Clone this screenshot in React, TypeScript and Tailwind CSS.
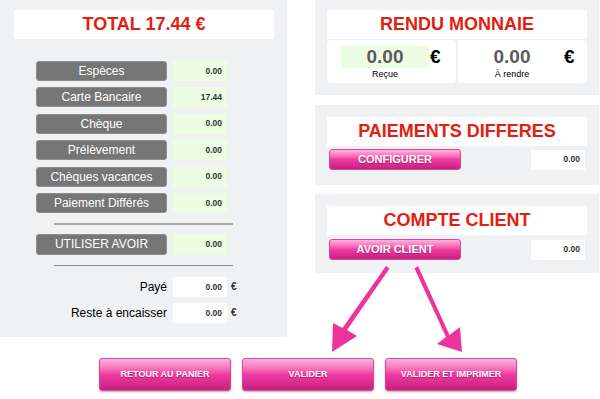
const font = { fontFamily: '"Liberation Sans", Arial, sans-serif' };

const payments = ["Espèces", "Carte Bancaire", "Chèque", "Prélèvement", "Chèques vacances", "Paiement Différés"];
const values = ["0.00", "17.44", "0.00", "0.00", "0.00", "0.00"];

const pinkBtn =
  "bg-gradient-to-b from-[#fbb3df] via-[#f03aa2] to-[#c81f80] border border-[#d9489d] text-white font-bold [text-shadow:0_1px_1px_rgba(120,0,60,0.5)]";

const Title = ({ children }: { children: string }) => (
  <div className="bg-white h-[29px] flex items-center justify-center text-[18px] font-bold text-[#e3200f]">
    {children}
  </div>
);

const GreyButton = ({ label }: { label: string }) => (
  <div className="w-[131px] h-[20px] rounded-[3px] bg-[#767676] border border-[#8e8e8e] text-white text-[12px] flex items-center justify-center">
    {label}
  </div>
);

const Cell = ({ value, green }: { value: string; green?: boolean }) => (
  <div
    className={`w-[54px] h-[20px] flex items-center justify-end pr-[5px] text-[8.5px] font-bold text-[#333] ${
      green ? "bg-[#edfde4]" : "bg-white"
    }`}
  >
    {value}
  </div>
);

const Arrows = () => (
  <svg className="absolute left-0 top-0 pointer-events-none" width="600" height="399">
    <g fill="#ef339c">
      <polygon points="386,266 389.5,268.5 347,330 357,336 332,352 333,323 342.5,328" />
      <polygon points="414.5,268.5 418,266 449.5,335 460,327 462,352 437,344 446,337" />
    </g>
  </svg>
);

export default function App() {
  return (
    <div className="relative w-[600px] h-[399px] bg-white overflow-hidden" style={font}>
      <div className="flex gap-[28px]">
        {/* left: total and payment methods */}
        <div className="w-[287px] h-[337px] bg-[#f0f1f3] pt-[10px] pl-[14px] pr-[13px]">
          <Title>TOTAL 17.44 €</Title>
          <div className="mt-[22px] pl-[22px] flex flex-col gap-[6.4px]">
            {payments.map((p, i) => (
              <div key={p} className="flex gap-[6px]">
                <GreyButton label={p} />
                <Cell value={values[i]} green />
              </div>
            ))}
          </div>
          <div className="ml-[40px] w-[179px] h-[2px] bg-[#a9a9a9] mt-[10px]" />
          <div className="pl-[22px] mt-[9px] flex gap-[6px]">
            <div className="w-[131px] h-[21px] rounded-[3px] bg-[#767676] border border-[#8e8e8e] text-white text-[12px] flex items-center justify-center">
              UTILISER AVOIR
            </div>
            <div className="w-[54px] h-[21px] flex items-center justify-end pr-[5px] text-[8.5px] font-bold text-[#333] bg-[#edfde4]">
              0.00
            </div>
          </div>
          <div className="ml-[40px] w-[179px] h-[1px] bg-[#8c8c8c] mt-[10px]" />
          <div className="mt-[11px] flex flex-col gap-[6px]">
            {["Payé", "Reste à encaisser"].map((l) => (
              <div key={l} className="flex items-center">
                <div className="w-[159px] text-right text-[12px] text-black pr-[6px]">{l}</div>
                <Cell value="0.00" />
                <span className="ml-[4px] text-[10px] font-bold text-[#333]">€</span>
              </div>
            ))}
          </div>
        </div>

        {/* right column */}
        <div className="w-[284px] flex flex-col">
          <div className="h-[95px] bg-[#f0f1f3] pt-[10px] px-[12px]">
            <Title>RENDU MONNAIE</Title>
            <div className="mt-[1px] flex gap-[2px]">
              <div className="w-[129px] h-[43px] bg-white rounded-[4px] relative">
                <div className="absolute left-[14px] top-[6px] w-[88px] h-[22px] bg-[#edfde4]" />
                <div className="absolute left-[14px] top-[5px] w-[88px] text-center text-[19px] font-bold text-[#5b5b5b] leading-[24px]">
                  0.00
                </div>
                <div className="absolute left-[103px] top-[5px] text-[19px] font-bold leading-[24px]">€</div>
                <div className="absolute left-[14px] top-[28px] w-[88px] text-center text-[9px] text-black">Reçue</div>
              </div>
              <div className="w-[129px] h-[43px] bg-white rounded-[4px] relative">
                <div className="absolute left-[10px] top-[5px] w-[88px] text-center text-[19px] font-bold text-[#5b5b5b] leading-[24px]">
                  0.00
                </div>
                <div className="absolute left-[106px] top-[5px] text-[19px] font-bold leading-[24px]">€</div>
                <div className="absolute left-[10px] top-[28px] w-[88px] text-center text-[9px] text-black">À rendre</div>
              </div>
            </div>
          </div>

          <div className="mt-[10px] h-[80px] bg-[#f0f1f3] pt-[12px] px-[12px]">
            <Title>PAIEMENTS DIFFERES</Title>
            <div className="mt-[3px] flex items-center justify-between pl-[2px] pr-[2px]">
              <div className={`w-[132px] h-[21px] rounded-[3px] flex items-center justify-center text-[11px] ${pinkBtn}`}>
                CONFIGURER
              </div>
              <Cell value="0.00" />
            </div>
          </div>

          <div className="mt-[9px] h-[79px] bg-[#f0f1f3] pt-[12px] px-[12px]">
            <Title>COMPTE CLIENT</Title>
            <div className="mt-[4px] flex items-center justify-between pl-[2px] pr-[2px]">
              <div className={`w-[132px] h-[21px] rounded-[3px] flex items-center justify-center text-[11px] ${pinkBtn}`}>
                AVOIR CLIENT
              </div>
              <Cell value="0.00" />
            </div>
          </div>
        </div>
      </div>

      <div className="mt-[21px] pl-[99px] flex gap-[11px]">
        {["RETOUR AU PANIER", "VALIDER", "VALIDER ET IMPRIMER"].map((b) => (
          <div
            key={b}
            className={`w-[132px] h-[33px] rounded-[3px] flex items-center justify-center text-[9px] shadow-[0_1px_2px_rgba(0,0,0,0.3)] ${pinkBtn}`}
          >
            {b}
          </div>
        ))}
      </div>

      <Arrows />
    </div>
  );
}
